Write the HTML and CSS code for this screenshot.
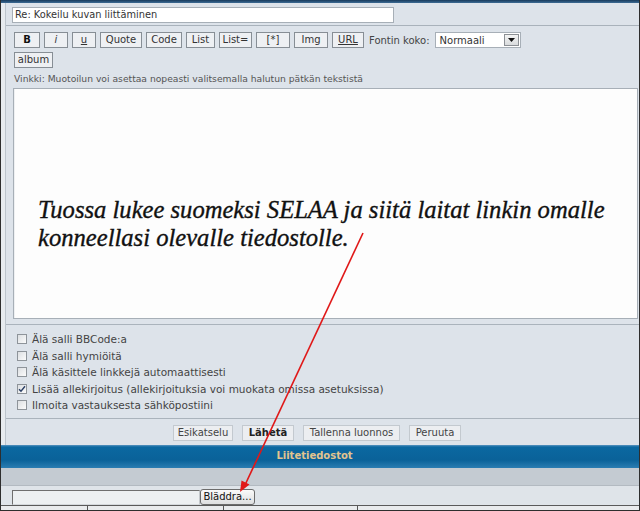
FILE: index.html
```html
<!DOCTYPE html>
<html lang="fi">
<head>
<meta charset="utf-8">
<title>Viestin kirjoitus</title>
<link rel="stylesheet" href="styles.css">
</head>
<body>
<div class="frame">
  <div class="topbar"></div>
  <div class="panel">
    <div class="title-row">
      <div class="field title-field">Re: Kokeilu kuvan liittäminen</div>
    </div>
    <div class="toolbar">
      <span class="btn btn-b">B</span>
      <span class="btn btn-i">i</span>
      <span class="btn btn-u">u</span>
      <span class="btn btn-quote">Quote</span>
      <span class="btn btn-code">Code</span>
      <span class="btn btn-list">List</span>
      <span class="btn btn-liste">List=</span>
      <span class="btn btn-star">[*]</span>
      <span class="btn btn-img">Img</span>
      <span class="btn btn-url">URL</span>
      <span class="font-label">Fontin koko:</span>
      <span class="select">Normaali<span class="select-btn"><svg width="7" height="4" viewBox="0 0 7 4"><path d="M0 0H7L3.5 4Z" fill="#111"/></svg></span></span>
    </div>
    <div class="toolbar toolbar-2">
      <span class="btn btn-album">album</span>
    </div>
    <div class="hint">Vinkki: Muotoilun voi asettaa nopeasti valitsemalla halutun pätkän tekstistä</div>
    <div class="editor">
      <p class="editor-text">Tuossa lukee suomeksi SELAA ja siitä laitat linkin omalle konneellasi olevalle tiedostolle.</p>
    </div>
    <div class="options">
      <label class="option"><span class="check"></span>Älä salli BBCode:a</label>
      <label class="option"><span class="check"></span>Älä salli hymiöitä</label>
      <label class="option"><span class="check"></span>Älä käsittele linkkejä automaattisesti</label>
      <label class="option"><span class="check checked"><svg width="8" height="8" viewBox="0 0 8 8"><path d="M1 4.2L3 6.3L7 1.2" fill="none" stroke="#2a3f66" stroke-width="1.4"/></svg></span>Lisää allekirjoitus (allekirjoituksia voi muokata omissa asetuksissa)</label>
      <label class="option"><span class="check"></span>Ilmoita vastauksesta sähköpostiini</label>
    </div>
    <div class="actions">
      <span class="act act-preview">Esikatselu</span>
      <span class="act act-send">Lähetä</span>
      <span class="act act-save">Tallenna luonnos</span>
      <span class="act act-cancel">Peruuta</span>
    </div>
  </div>
  <div class="bluebar">Liitetiedostot</div>
  <div class="grayband"></div>
  <div class="filerow">
    <span class="file-field"></span>
    <span class="browse">Bläddra...</span>
  </div>
  <div class="cells">
    <span class="cell c1"></span>
    <span class="cell c2"></span>
    <span class="cell c3"></span>
    <span class="cell c4"></span>
  </div>
  <svg class="arrow" width="640" height="511" viewBox="0 0 640 511">
    <line x1="362" y1="233" x2="244" y2="485" stroke="#e01818" stroke-width="1.6"/>
    <polygon points="239,492 248.5,484.5 240.5,480.5" fill="#e01818"/>
  </svg>
</div>
</body>
</html>
```
FILE: styles.css
```css
* { box-sizing: border-box; }
html, body { margin: 0; padding: 0; }
body {
  width: 640px;
  height: 511px;
  overflow: hidden;
  font-family: "DejaVu Sans", Verdana, sans-serif;
  font-size: 10px;
  color: #222;
}
.frame {
  position: relative;
  width: 640px;
  height: 511px;
  border: 1px solid #2e2e2e;
  border-top: none;
  background: #e7ebef;
  display: flex;
  flex-direction: column;
  overflow: hidden;
}
.topbar {
  height: 3px;
  flex: none;
  background: linear-gradient(#173a5c, #3d6c95);
}
.panel {
  margin-left: 4px;
  border-left: 1px solid #bcc4cc;
  background: #dde3ea;
  flex: none;
}
.title-row {
  padding: 4px 0 2px 6px;
  border-bottom: 1px solid #a9b2bb;
}
.field {
  height: 16px;
  background: #fff;
  border: 1px solid #a7afb7;
  padding-left: 2px;
  line-height: 14px;
  color: #333;
}
.title-field { width: 382px; font-size: 9.8px; }
.toolbar {
  display: flex;
  align-items: center;
  gap: 4px;
  padding: 6px 0 0 8px;
}
.toolbar-2 { padding-top: 4px; }
.btn {
  height: 16px;
  border: 1px solid #878e95;
  background: #eef0f3;
  display: inline-flex;
  align-items: center;
  justify-content: center;
  color: #333;
  line-height: 14px;
}
.btn-b { width: 26px; font-weight: bold; color: #111; }
.btn-i { width: 24px; font-style: italic; }
.btn-u { width: 24px; text-decoration: underline; }
.btn-quote { width: 42px; }
.btn-code { width: 36px; }
.btn-list { width: 29px; }
.btn-liste { width: 33px; }
.btn-star { width: 34px; }
.btn-img { width: 34px; }
.btn-url { width: 32px; text-decoration: underline; }
.btn-album { width: 39px; }
.font-label { color: #444; margin-left: 1px; }
.select {
  width: 86px;
  height: 16px;
  margin-left: 1px;
  background: #fff;
  border: 1px solid #a7afb7;
  display: flex;
  align-items: center;
  padding-left: 4px;
  color: #333;
}
.select-btn {
  margin-left: auto;
  margin-right: 1px;
  width: 15px;
  height: 12px;
  border: 1px solid #8c9095;
  background: linear-gradient(#f4f4f4, #d9dbdd);
  display: flex;
  align-items: center;
  justify-content: center;
}
.hint {
  margin-top: 4px;
  padding-left: 8px;
  height: 14px;
  line-height: 14px;
  font-size: 9.2px;
  color: #555;
}
.editor {
  margin: 2px 1px 0 7px;
  height: 231px;
  border: 1px solid #a7afb7;
  background: #fdfdfd;
  box-shadow: inset 1px 0 0 #eef0f2;
}
.editor-text {
  margin: 0;
  padding: 107px 20px 0 24px;
  font-family: "Liberation Serif", "Times New Roman", serif;
  font-style: italic;
  font-size: 24.6px;
  line-height: 28px;
  color: #111;
  -webkit-text-stroke: 0.35px #111;
}
.options {
  margin-top: 5px;
  border-top: 1px solid #aab3bc;
  border-bottom: 1px solid #aab3bc;
  padding: 6px 0 4px 11px;
}
.option {
  display: flex;
  align-items: center;
  gap: 5px;
  height: 16.5px;
  font-size: 10.5px;
  color: #444;
}
.check {
  width: 10px;
  height: 10px;
  border: 1px solid #8e949a;
  background: linear-gradient(135deg, #dcdfe2, #fbfbfb);
  display: flex;
  align-items: center;
  justify-content: center;
}
.actions {
  display: flex;
  justify-content: center;
  gap: 9px;
  padding: 6px 11px 4px 0;
}
.act {
  height: 16px;
  border: 1px solid #c3c9cf;
  background: #eceef1;
  display: inline-flex;
  align-items: center;
  justify-content: center;
  color: #444;
}
.act-preview { width: 60px; }
.act-send { width: 52px; font-weight: bold; color: #222; }
.act-save { width: 97px; }
.act-cancel { width: 52px; }
.bluebar {
  height: 23px;
  flex: none;
  background: linear-gradient(#5a94c0 0, #0b68a1 2px, #0a6299 65%, #2b7db2 100%);
  color: #e2c48f;
  font-weight: bold;
  text-align: center;
  line-height: 22px;
  padding-right: 11px;
}
.grayband {
  height: 18px;
  flex: none;
  background: #c4cbd2;
  border-bottom: 1px solid #b3bac1;
}
.filerow {
  flex: none;
  height: 19px;
  background: #dfe4e9;
  display: flex;
  align-items: flex-end;
  padding-left: 11px;
}
.file-field {
  width: 188px;
  height: 15px;
  background: #edf0f2;
  border-top: 1px solid #6f6f6f;
  border-left: 1px solid #6f6f6f;
  border-bottom: 1px solid #d4d8dc;
  border-right: 1px solid #c4c8cc;
}
.browse {
  width: 55px;
  height: 16px;
  border: 1px solid #6c6c6c;
  border-radius: 3px;
  background: linear-gradient(#fafafa, #dedfe0);
  display: inline-flex;
  align-items: center;
  justify-content: center;
  color: #111;
}
.cells {
  flex: 1;
  display: flex;
  border-top: 1px solid #5a5a5a;
  background: #e9ebed;
}
.cell { height: 100%; border-left: 1px solid #555; }
.c1 { width: 86px; border-left: none; }
.c2 { width: 136px; }
.c3 { width: 134px; }
.c4 { flex: 1; }
.arrow {
  position: absolute;
  left: 0;
  top: 0;
  pointer-events: none;
}
```
